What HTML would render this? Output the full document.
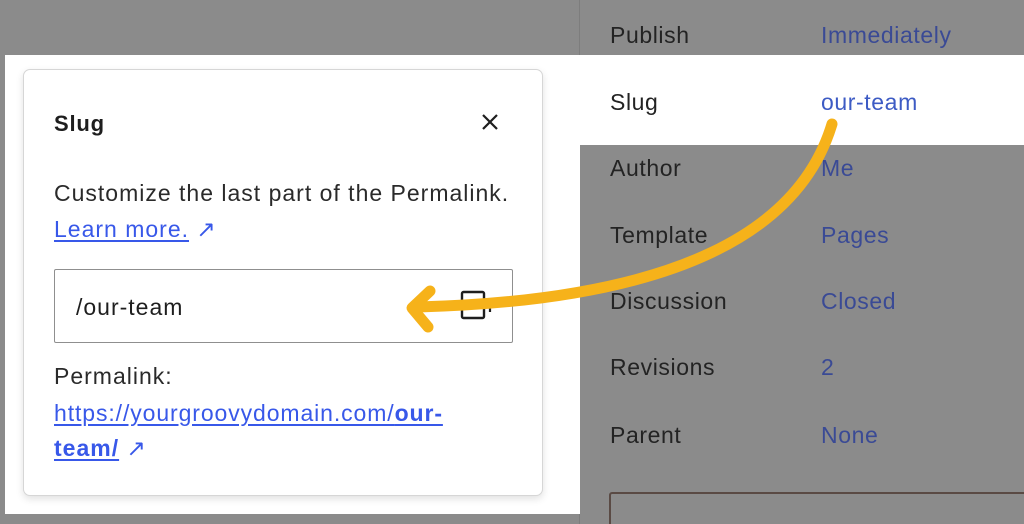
<!DOCTYPE html>
<html><head><style>
html,body{margin:0;width:1024px;height:524px;overflow:hidden}
body{background:#8b8b8b;position:relative;font-family:"Liberation Sans",sans-serif}
.a{position:absolute;white-space:nowrap}
.lbl{position:absolute;left:610px;font-size:23px;letter-spacing:0.6px;color:#232323;line-height:26px}
.val{position:absolute;left:821px;font-size:23px;letter-spacing:0.6px;color:#3a4a95;line-height:26px}
.t{font-size:23px;letter-spacing:1px;color:#1e1e1e;line-height:26px}
.lk{color:#3858e9;text-decoration:underline;text-underline-offset:3px}
</style></head><body>
<div class="a" style="left:579px;top:0;width:1px;height:524px;background:#7d7d7d"></div>
<div class="a" style="left:5px;top:55px;width:575px;height:459px;background:#fff"></div>
<div class="a" style="left:580px;top:55px;width:444px;height:90px;background:#fff"></div>
<div class="a" style="left:23px;top:69px;width:518px;height:425px;border:1px solid #d6d6d6;border-radius:7px;background:#fff;box-shadow:0 3px 8px rgba(0,0,0,.12)"></div>
<div class="a t" style="left:54px;top:111px;font-weight:bold;font-size:22px;letter-spacing:0.8px">Slug</div>
<svg class="a" style="left:480px;top:112px" width="20" height="20"><path d="M3 3L17 17M17 3L3 17" stroke="#1e1e1e" stroke-width="2.2"/></svg>
<div class="a t" style="left:54px;top:180px;color:#2a2a2a">Customize the last part of the Permalink.</div>
<div class="a t" style="left:54px;top:216px"><span class="lk">Learn more.</span> <span style="color:#3858e9">↗</span></div>
<div class="a" style="left:54px;top:269px;width:457px;height:72px;border:1px solid #8f8f8f;border-radius:2px"></div>
<div class="a t" style="left:76px;top:294px">/our-team</div>
<svg class="a" style="left:458px;top:288px" width="36" height="36"><rect x="4" y="4" width="22" height="26" rx="1.5" fill="none" stroke="#1e1e1e" stroke-width="2.4"/><path d="M32 10v14" stroke="#1e1e1e" stroke-width="2.2"/></svg>
<div class="a t" style="left:54px;top:363px;color:#2a2a2a">Permalink:</div>
<div class="a t" style="left:54px;top:400px;letter-spacing:0.9px"><span class="lk">https://yourgroovydomain.com/<b>our-</b></span></div>
<div class="a t" style="left:54px;top:435px"><span class="lk"><b>team/</b></span> <span style="color:#3858e9">↗</span></div>
<div class="lbl" style="top:22px">Publish</div><div class="val" style="top:22px">Immediately</div>
<div class="lbl" style="top:89px">Slug</div><div class="val" style="top:89px;color:#3d5bc4">our-team</div>
<div class="lbl" style="top:155px">Author</div><div class="val" style="top:155px">Me</div>
<div class="lbl" style="top:222px">Template</div><div class="val" style="top:222px">Pages</div>
<div class="lbl" style="top:288px">Discussion</div><div class="val" style="top:288px">Closed</div>
<div class="lbl" style="top:354px">Revisions</div><div class="val" style="top:354px">2</div>
<div class="lbl" style="top:422px">Parent</div><div class="val" style="top:422px">None</div>
<div class="a" style="left:609px;top:492px;width:420px;height:40px;border:2px solid #5a4a44;border-radius:3px"></div>
<svg class="a" style="left:0;top:0" width="1024" height="524"><path d="M832 124C800 230 680 300 418 307" fill="none" stroke="#f6b21a" stroke-width="11" stroke-linecap="round"/><path d="M430 291L412 308L428 327" fill="none" stroke="#f6b21a" stroke-width="11" stroke-linecap="round" stroke-linejoin="round"/></svg>
</body></html>
